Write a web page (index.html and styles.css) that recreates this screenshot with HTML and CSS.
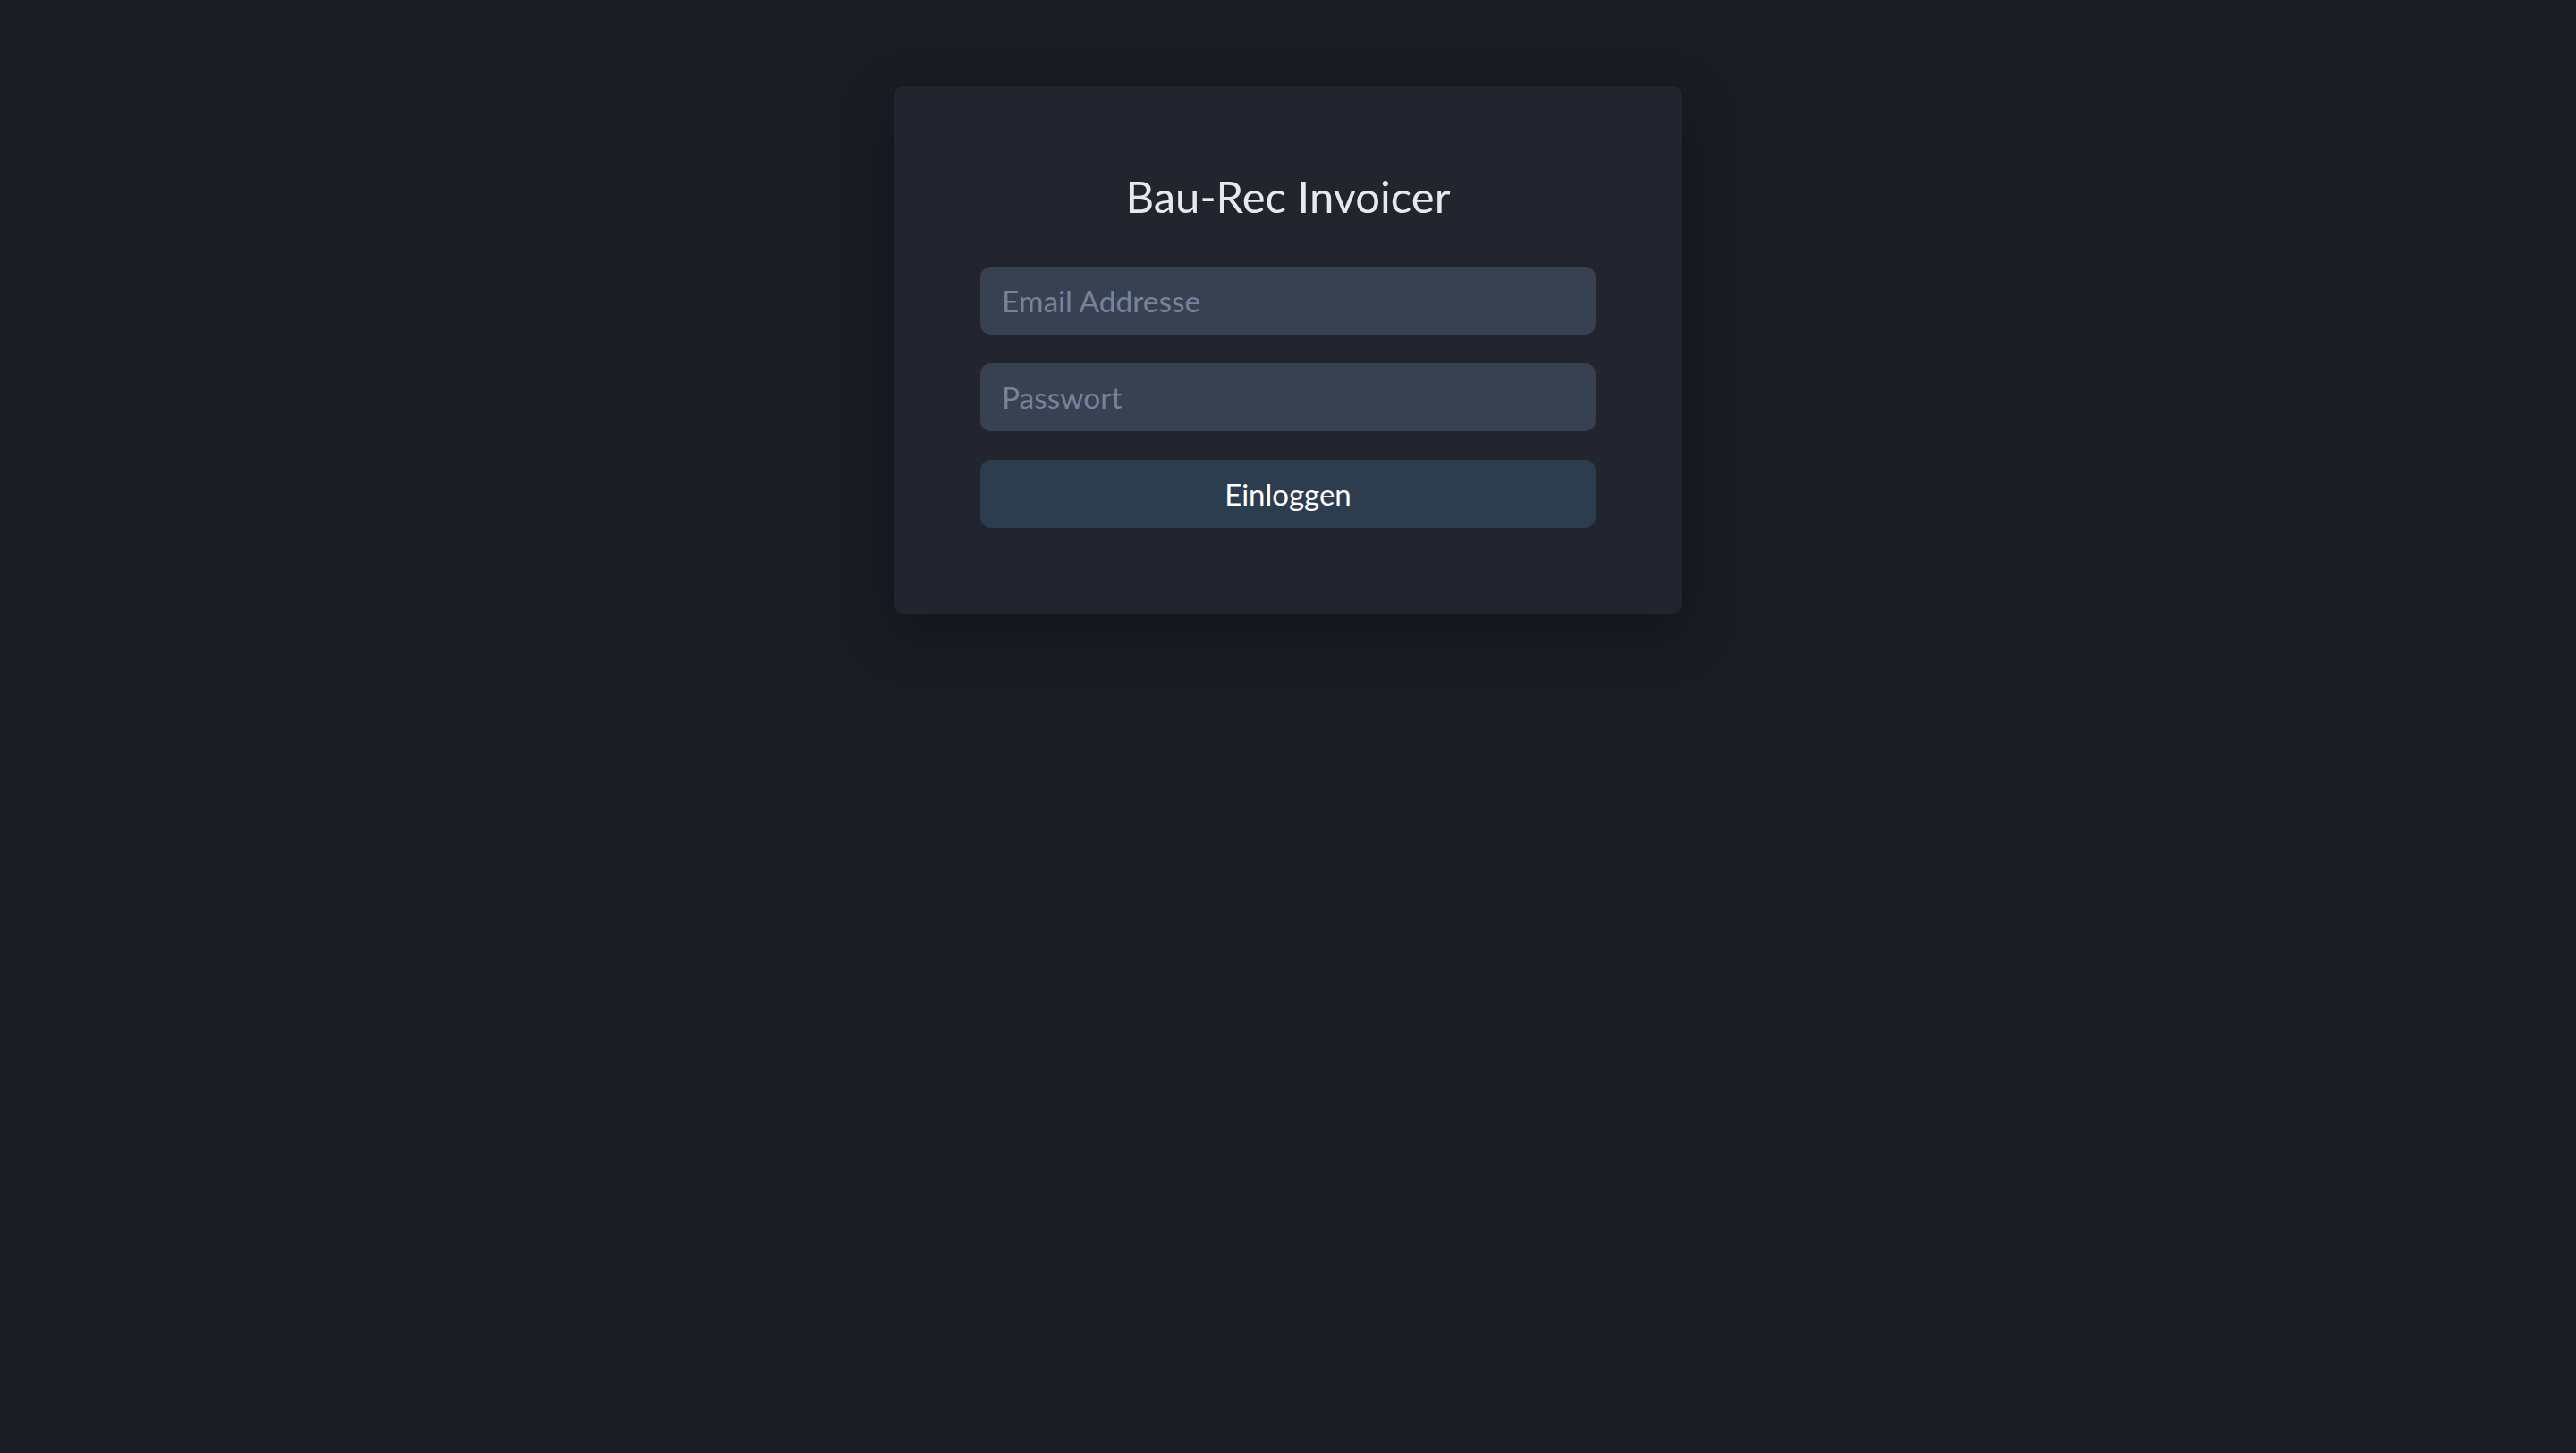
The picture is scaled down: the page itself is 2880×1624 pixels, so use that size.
FILE: index.html
```html
<!DOCTYPE html>
<html lang="de">
<head>
<meta charset="utf-8">
<title>Bau-Rec Invoicer</title>
<link rel="stylesheet" href="styles.css">
</head>
<body>
<main class="page">
  <form class="card">
    <h1 class="title">Bau-Rec Invoicer</h1>
    <input class="field" type="email" placeholder="Email Addresse">
    <input class="field" type="password" placeholder="Passwort">
    <button class="btn" type="button">Einloggen</button>
  </form>
</main>
</body>
</html>
```

FILE: styles.css
```css
* { box-sizing: border-box; }
html, body {
  margin: 0;
  padding: 0;
  background: #1a1c23;
  min-height: 100%;
}
body {
  font-family: "Lato", "Noto Sans", sans-serif;
  color: #e5e7eb;
}
.page {
  display: flex;
  justify-content: center;
  padding-top: 96px;
  min-height: 1624px;
  align-items: flex-start;
}
.card {
  width: 880px;
  background: #22252e;
  border-radius: 10px;
  padding: 96px 96px 96px;
  display: flex;
  flex-direction: column;
  gap: 32px;
  box-shadow: 0 20px 60px rgba(0, 0, 0, 0.28);
}
.title {
  margin: -2px 0 18px;
  font-size: 49px;
  font-weight: 400;
  line-height: 58px;
  text-align: center;
  color: #e6e9ef;
}
.field {
  height: 76px;
  border: none;
  border-radius: 12px;
  background: #384152;
  padding: 0 24px;
  font-family: inherit;
  font-size: 33.5px;
  color: #e5e7eb;
  outline: none;
}
.field::placeholder {
  color: #76839a;
}
.btn {
  height: 76px;
  border: none;
  border-radius: 12px;
  background: #2c3d50;
  font-family: inherit;
  font-size: 33px;
  color: #ffffff;
  cursor: pointer;
}
```
